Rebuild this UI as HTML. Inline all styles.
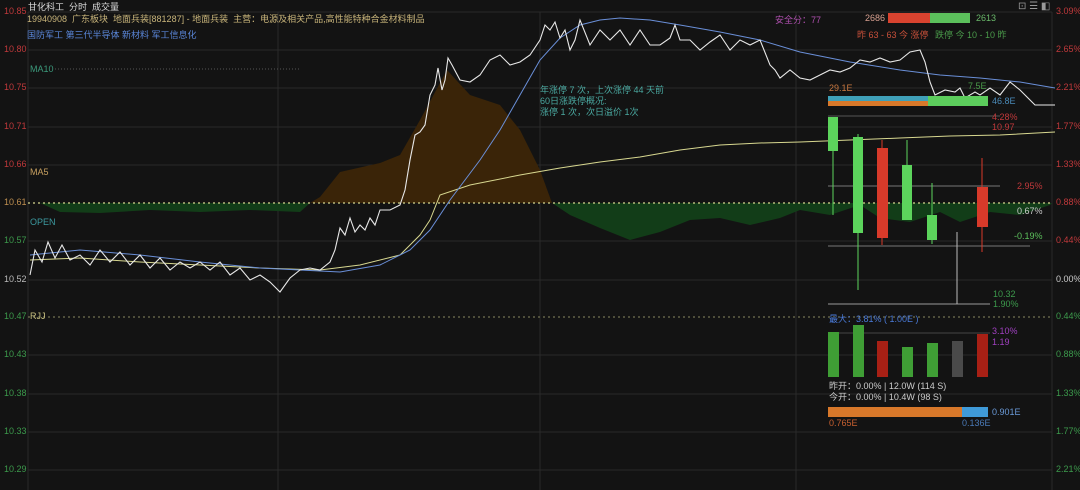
<!DOCTYPE html><html><head><meta charset="utf-8"><style>
body{margin:0;width:1080px;height:490px;background:#131313;overflow:hidden;font-family:"Liberation Sans","Noto Sans CJK SC",sans-serif;font-size:9px;position:relative}
.a{position:absolute;white-space:nowrap}
.r{color:#c0393b}.g{color:#3c9a4c}
</style></head><body>
<svg class="a" style="left:0;top:0" width="1080" height="490">
<g stroke="#2a2a2a" stroke-width="1">
<line x1="28" y1="12" x2="1052" y2="12"/><line x1="28" y1="50" x2="1052" y2="50"/><line x1="28" y1="88" x2="1052" y2="88"/><line x1="28" y1="127" x2="1052" y2="127"/><line x1="28" y1="165" x2="1052" y2="165"/><line x1="28" y1="241" x2="1052" y2="241"/><line x1="28" y1="280" x2="1052" y2="280"/><line x1="28" y1="355" x2="1052" y2="355"/><line x1="28" y1="394" x2="1052" y2="394"/><line x1="28" y1="432" x2="1052" y2="432"/><line x1="28" y1="470" x2="1052" y2="470"/>
<line x1="28" y1="12" x2="28" y2="490"/><line x1="1052" y1="12" x2="1052" y2="490"/><line x1="278" y1="12" x2="278" y2="490"/><line x1="540" y1="12" x2="540" y2="490"/><line x1="796" y1="12" x2="796" y2="490"/>
</g>
<path d="M310,203 L320,197 340,172 380,163 400,155 420,120 447,70 470,95 500,105 520,130 540,170 552,203Z" fill="#3a2408"/>
<path d="M552,203 L570,215 600,228 630,240 660,232 690,220 720,218 750,225 780,218 800,210 830,215 860,205 880,218 910,222 940,212 960,222 990,212 1020,215 1050,205 1052,203Z" fill="#123d18"/>
<path d="M40,203 L60,212 100,213 150,210 200,212 250,210 300,212 310,203Z" fill="#123d18"/>
<line x1="28" y1="203" x2="1052" y2="203" stroke="#d8d890" stroke-dasharray="2,3" stroke-width="1.3"/>
<line x1="28" y1="317" x2="1052" y2="317" stroke="#888860" stroke-dasharray="2,3"/>
<line x1="55" y1="69" x2="300" y2="69" stroke="#555" stroke-dasharray="1,2"/>
<polyline fill="none" stroke="#d8d890" stroke-width="1" points="30,260 80,258 140,262 200,265 260,268 320,270 360,265 400,255 420,235 430,220 440,195 470,185 520,175 560,168 600,162 640,157 680,150 720,145 760,143 800,142 850,140 900,138 950,136 1000,135 1055,132"/>
<polyline fill="none" stroke="#6a8fd8" stroke-width="1" points="30,255 80,250 140,255 200,262 260,268 300,270 340,272 380,265 410,250 430,230 450,200 480,160 500,130 520,95 540,60 560,38 580,25 600,20 620,18 650,20 680,25 720,32 760,40 800,52 850,62 900,70 940,75 980,78 1020,82 1055,88"/>
<polyline fill="none" stroke="#e8e8e8" stroke-width="1.1" points="30,275 35,250 42,262 48,242 55,258 62,245 70,260 80,255 90,265 100,250 110,262 120,252 130,265 140,255 150,268 160,258 170,270 180,262 190,268 200,262 210,270 220,262 230,275 240,268 250,280 260,275 270,282 280,292 290,278 300,270 310,268 320,270 330,262 335,250 340,228 345,235 350,218 355,232 360,225 365,230 370,218 375,225 380,210 390,210 400,205 405,190 410,160 415,135 420,132 425,125 430,95 435,85 438,68 442,90 445,80 448,58 452,65 460,80 470,82 480,75 490,60 500,55 510,65 520,62 530,55 540,40 545,25 550,30 555,22 560,38 565,30 570,50 575,40 580,20 590,45 600,30 610,40 620,30 630,45 640,30 650,45 660,45 670,38 675,25 680,40 690,40 700,50 710,42 720,35 730,50 740,40 750,45 760,40 770,65 775,70 780,78 790,70 800,78 810,80 820,75 830,70 840,72 850,68 860,60 870,62 880,58 890,62 900,60 910,52 920,50 925,62 930,82 935,95 945,90 955,92 960,88 965,98 975,92 980,95 990,88 1000,95 1010,82 1020,90 1030,100 1035,105 1055,105"/>
<line x1="828" y1="116" x2="1000" y2="116" stroke="#555"/>
<line x1="828" y1="186" x2="1000" y2="186" stroke="#777"/>
<line x1="828" y1="246" x2="1030" y2="246" stroke="#777"/>
<line x1="828" y1="304" x2="990" y2="304" stroke="#999"/>
<line x1="828" y1="333" x2="990" y2="333" stroke="#444"/>
<g stroke-width="1">
<line x1="833" y1="117" x2="833" y2="215" stroke="#5cd45c"/><rect x="828" y="117" width="10" height="34" fill="#5cd45c"/>
<line x1="858" y1="134" x2="858" y2="290" stroke="#5cd45c"/><rect x="853" y="137" width="10" height="96" fill="#5cd45c"/>
<line x1="882" y1="140" x2="882" y2="245" stroke="#d83a2a"/><rect x="877" y="148" width="11" height="90" fill="#d83a2a"/>
<line x1="907" y1="140" x2="907" y2="220" stroke="#5cd45c"/><rect x="902" y="165" width="10" height="55" fill="#5cd45c"/>
<line x1="932" y1="183" x2="932" y2="244" stroke="#5cd45c"/><rect x="927" y="215" width="10" height="25" fill="#5cd45c"/>
<line x1="957" y1="232" x2="957" y2="304" stroke="#bbb"/>
<line x1="982" y1="158" x2="982" y2="252" stroke="#d83a2a"/><rect x="977" y="187" width="11" height="40" fill="#d83a2a"/>
</g>
<rect x="828" y="332" width="11" height="45" fill="#3f9e35"/><rect x="853" y="325" width="11" height="52" fill="#3f9e35"/><rect x="877" y="341" width="11" height="36" fill="#a82015"/><rect x="902" y="347" width="11" height="30" fill="#3f9e35"/><rect x="927" y="343" width="11" height="34" fill="#3f9e35"/><rect x="952" y="341" width="11" height="36" fill="#4a4a4a"/><rect x="977" y="334" width="11" height="43" fill="#a82015"/>
<rect x="828" y="96" width="100" height="5" fill="#3fa0b8"/><rect x="828" y="101" width="100" height="5" fill="#d8782a"/><rect x="928" y="96" width="60" height="10" fill="#5ccc5c"/>
<rect x="828" y="407" width="134" height="10" fill="#d8782a"/><rect x="962" y="407" width="26" height="10" fill="#3f9ad8"/>
<rect x="888" y="13" width="42" height="10" fill="#d8432f"/><rect x="930" y="13" width="40" height="10" fill="#5cc05c"/>
</svg>
<div class="a" style="left:28px;top:0;color:#ddd">甘化科工 &nbsp;分时 &nbsp;成交量</div>
<div class="a" style="left:27px;top:12px;color:#c8b47a">19940908 &nbsp;广东板块 &nbsp;地面兵装[881287] - 地面兵装 &nbsp;主营：电源及相关产品,高性能特种合金材料制品</div>
<div class="a" style="left:27px;top:28px;color:#5a86d8">国防军工 第三代半导体 新材料 军工信息化</div>
<div class="a" style="left:30px;top:64px;color:#3c9a7c">MA10</div>
<div class="a" style="left:30px;top:167px;color:#c8a060">MA5</div>
<div class="a" style="left:30px;top:217px;color:#3c9aa0">OPEN</div>
<div class="a" style="left:30px;top:311px;color:#c8c080">RJJ</div>
<div class="a" style="left:540px;top:85px;color:#4aa8a0;line-height:11px">年涨停 7 次，上次涨停 44 天前<br>60日涨跌停概况:<br>涨停 1 次，次日溢价 1次</div>
<div class="a r" style="left:4px;top:6px">10.85</div><div class="a r" style="left:4px;top:44px">10.80</div><div class="a r" style="left:4px;top:82px">10.75</div><div class="a r" style="left:4px;top:121px">10.71</div><div class="a r" style="left:4px;top:159px">10.66</div><div class="a" style="left:4px;top:197px;color:#c09050">10.61</div><div class="a g" style="left:4px;top:235px">10.57</div><div class="a" style="left:4px;top:274px;color:#bbb">10.52</div><div class="a g" style="left:4px;top:311px">10.47</div><div class="a g" style="left:4px;top:349px">10.43</div><div class="a g" style="left:4px;top:388px">10.38</div><div class="a g" style="left:4px;top:426px">10.33</div><div class="a g" style="left:4px;top:464px">10.29</div>
<div class="a r" style="left:1056px;top:6px">3.09%</div><div class="a r" style="left:1056px;top:44px">2.65%</div><div class="a r" style="left:1056px;top:82px">2.21%</div><div class="a r" style="left:1056px;top:121px">1.77%</div><div class="a r" style="left:1056px;top:159px">1.33%</div><div class="a r" style="left:1056px;top:197px">0.88%</div><div class="a r" style="left:1056px;top:235px">0.44%</div><div class="a" style="left:1056px;top:274px;color:#ccc">0.00%</div><div class="a g" style="left:1056px;top:311px">0.44%</div><div class="a g" style="left:1056px;top:349px">0.88%</div><div class="a g" style="left:1056px;top:388px">1.33%</div><div class="a g" style="left:1056px;top:426px">1.77%</div><div class="a g" style="left:1056px;top:464px">2.21%</div>
<div class="a" style="left:775px;top:13px;color:#b050b0">安全分：77</div>
<div class="a" style="left:865px;top:13px;color:#d8a090">2686</div><div class="a" style="left:976px;top:13px;color:#6ab86a">2613</div>
<div class="a" style="left:857px;top:28px;color:#c8503a">昨 63 - 63 今 涨停</div><div class="a" style="left:935px;top:28px;color:#4a9a4a">跌停 今 10 - 10 昨</div>
<div class="a" style="left:1018px;top:1px;color:#999;font-size:10px">⊡ ☰ ◧</div>
<div class="a" style="left:829px;top:83px;color:#c87840">29.1E</div><div class="a" style="left:968px;top:81px;color:#4a9a4a">7.5E</div><div class="a" style="left:992px;top:96px;color:#4a8ab8">46.8E</div>
<div class="a r" style="left:992px;top:112px">4.28%</div><div class="a r" style="left:992px;top:122px">10.97</div>
<div class="a r" style="left:1017px;top:181px">2.95%</div><div class="a" style="left:1017px;top:206px;color:#ccc">0.67%</div><div class="a g" style="left:1014px;top:231px;color:#5cc05c">-0.19%</div>
<div class="a g" style="left:993px;top:289px">10.32</div><div class="a g" style="left:993px;top:299px">1.90%</div>
<div class="a" style="left:829px;top:312px;color:#4a7ad8">最大：3.81% ( 1.00E )</div>
<div class="a" style="left:992px;top:326px;color:#a040c0">3.10%</div><div class="a" style="left:992px;top:337px;color:#a040c0">1.19</div>
<div class="a" style="left:829px;top:379px;color:#ccc">昨开：0.00% | 12.0W (114 S)</div><div class="a" style="left:829px;top:390px;color:#ccc">今开：0.00% | 10.4W (98 S)</div>
<div class="a" style="left:992px;top:407px;color:#6a9ad8">0.901E</div><div class="a" style="left:829px;top:418px;color:#c86030">0.765E</div><div class="a" style="left:962px;top:418px;color:#4a7ab8">0.136E</div>
</body></html>
